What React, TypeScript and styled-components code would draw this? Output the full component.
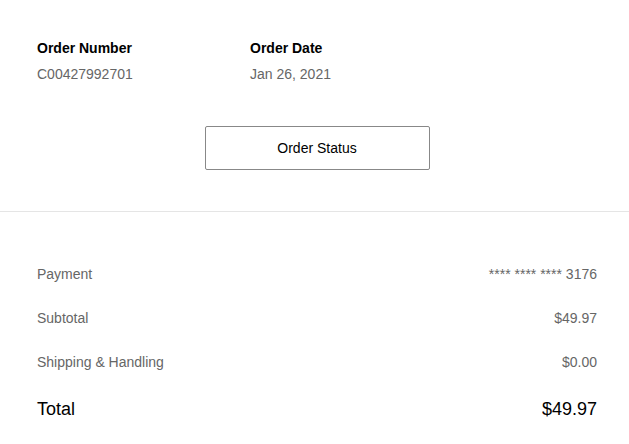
import React from "react";
import styled, { createGlobalStyle } from "styled-components";

const Global = createGlobalStyle`
  html, body { margin: 0; padding: 0; background: #fff; }
  body { font-family: "Liberation Sans", Arial, sans-serif; }
`;

const Page = styled.div`
  width: 629px;
`;

const Header = styled.section`
  padding: 40px 32px 41px 37px;
  border-bottom: 1px solid #e5e5e5;
`;

const InfoRow = styled.div`
  display: grid;
  grid-template-columns: 213px auto;
`;

const Info = styled.div`
  display: flex;
  flex-direction: column;
  gap: 10px;
`;

const InfoLabel = styled.div`
  font-size: 14px;
  line-height: 16px;
  font-weight: 700;
  color: #000;
`;

const InfoValue = styled.div`
  font-size: 14px;
  line-height: 16px;
  color: #666;
`;

const ButtonRow = styled.div`
  display: flex;
  justify-content: center;
  margin-top: 44px;
`;

const StatusButton = styled.button`
  width: 225px;
  height: 44px;
  background: #fff;
  border: 1px solid #888;
  border-radius: 2px;
  font-family: inherit;
  font-size: 14px;
  color: #000;
  cursor: pointer;
`;

const Summary = styled.section`
  padding: 40px 32px 0 37px;
`;

const Row = styled.div<{ $total?: boolean }>`
  display: flex;
  justify-content: space-between;
  align-items: center;
  height: ${(p) => (p.$total ? "50px" : "44px")};
  font-size: ${(p) => (p.$total ? "18px" : "14px")};
  color: ${(p) => (p.$total ? "#000" : "#666")};
`;

const rows = [
  { label: "Payment", value: "**** **** **** 3176" },
  { label: "Subtotal", value: "$49.97" },
  { label: "Shipping & Handling", value: "$0.00" },
];

export default function App() {
  return (
    <Page>
      <Global />
      <Header>
        <InfoRow>
          <Info>
            <InfoLabel>Order Number</InfoLabel>
            <InfoValue>C00427992701</InfoValue>
          </Info>
          <Info>
            <InfoLabel>Order Date</InfoLabel>
            <InfoValue>Jan 26, 2021</InfoValue>
          </Info>
        </InfoRow>
        <ButtonRow>
          <StatusButton>Order Status</StatusButton>
        </ButtonRow>
      </Header>
      <Summary>
        {rows.map((r) => (
          <Row key={r.label}>
            <span>{r.label}</span>
            <span>{r.value}</span>
          </Row>
        ))}
        <Row $total>
          <span>Total</span>
          <span>$49.97</span>
        </Row>
      </Summary>
    </Page>
  );
}
